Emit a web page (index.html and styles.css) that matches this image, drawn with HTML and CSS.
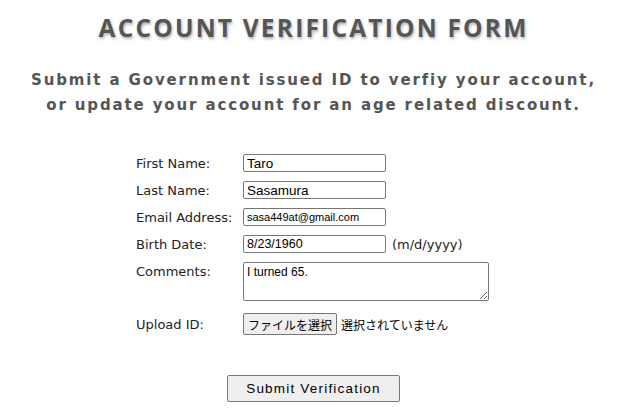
FILE: index.html
```html
<!DOCTYPE html>
<html lang="en">
<head>
<meta charset="utf-8">
<title>Account Verification Form</title>
<link rel="stylesheet" href="styles.css">
</head>
<body>
<div class="page">
  <h1 class="title">ACCOUNT VERIFICATION FORM</h1>
  <p class="subtitle">Submit a Government issued ID to verfiy your account,<br>or update your account for an age related discount.</p>
  <form class="form">
    <label class="label">First Name:</label>
    <div class="field"><input class="text" type="text" value="Taro"></div>
    <label class="label">Last Name:</label>
    <div class="field"><input class="text" type="text" value="Sasamura"></div>
    <label class="label">Email Address:</label>
    <div class="field"><input class="text small" type="text" value="sasa449at@gmail.com"></div>
    <label class="label">Birth Date:</label>
    <div class="field"><input class="text mid" type="text" value="8/23/1960"><span class="hint">(m/d/yyyy)</span></div>
    <label class="label top">Comments:</label>
    <div class="field"><textarea class="area">I turned 65.</textarea></div>
    <label class="label upload-label">Upload ID:</label>
    <div class="field upload"><span class="file-btn">ファイルを選択</span><span class="file-none">選択されていません</span></div>
    <div class="actions"><button class="submit" type="button">Submit Verification</button></div>
  </form>
</div>
</body>
</html>
```
FILE: styles.css
```css
html, body {
  margin: 0;
  background: #ffffff;
}
body {
  padding: 8px;
}
.page {
  width: 611px;
}
.title {
  margin: 3px 0 0;
  text-align: center;
  font-family: "Open Sans", "Liberation Sans", sans-serif;
  font-weight: 700;
  font-size: 24.5px;
  line-height: 34px;
  letter-spacing: 2.2px;
  color: #555555;
  text-shadow: 1px 2px 3px rgba(0, 0, 0, 0.3);
}
.subtitle {
  margin: 23px 0 0;
  text-align: center;
  font-family: "DejaVu Sans", Verdana, sans-serif;
  font-weight: 700;
  font-size: 15px;
  line-height: 25px;
  letter-spacing: 1.87px;
  color: #555555;
}
.form {
  display: grid;
  grid-template-columns: 107px 1fr;
  row-gap: 9px;
  margin: 36px 0 0 128px;
  font-family: "DejaVu Sans", Tahoma, sans-serif;
  font-size: 13px;
  color: #222222;
}
.label {
  display: flex;
  align-items: center;
}
.label.top {
  align-items: flex-start;
  padding-top: 2px;
}
.field {
  display: flex;
  align-items: center;
}
.text {
  box-sizing: border-box;
  width: 143px;
  height: 18px;
  margin: 0;
  padding: 0 3px;
  border: 1px solid #767676;
  border-radius: 2px;
  font-family: "Liberation Sans", Arial, sans-serif;
  font-size: 13.5px;
  color: #000;
}
.text.small {
  font-size: 11px;
}
.text.mid {
  font-size: 12.5px;
}
.hint {
  margin-left: 6px;
  font-size: 13px;
}
.area {
  box-sizing: border-box;
  width: 246px;
  height: 39px;
  margin: 0;
  padding: 2px 3px;
  border: 1px solid #767676;
  border-radius: 2px;
  font-family: "Liberation Sans", Arial, sans-serif;
  font-size: 12px;
  color: #000;
  resize: both;
}
.upload-label {
  margin-top: 3px;
}
.upload {
  margin-top: 3px;
}
.file-btn {
  box-sizing: border-box;
  height: 22px;
  padding: 0 4px;
  display: flex;
  align-items: center;
  border: 1px solid #767676;
  border-radius: 2px;
  background: #efefef;
  font-family: "Noto Sans CJK JP", sans-serif;
  font-size: 12px;
  color: #000;
}
.file-none {
  margin-left: 4px;
  font-family: "Noto Sans CJK JP", sans-serif;
  font-size: 12px;
  color: #000;
}
.actions {
  grid-column: 1 / -1;
  margin: 31px 0 0 91px;
}
.submit {
  box-sizing: border-box;
  width: 173px;
  height: 27px;
  margin: 0;
  border: 1px solid #767676;
  border-radius: 2px;
  background: #efefef;
  font-family: "Liberation Sans", Arial, sans-serif;
  font-size: 13.5px;
  letter-spacing: 1.2px;
  color: #000;
}
```
